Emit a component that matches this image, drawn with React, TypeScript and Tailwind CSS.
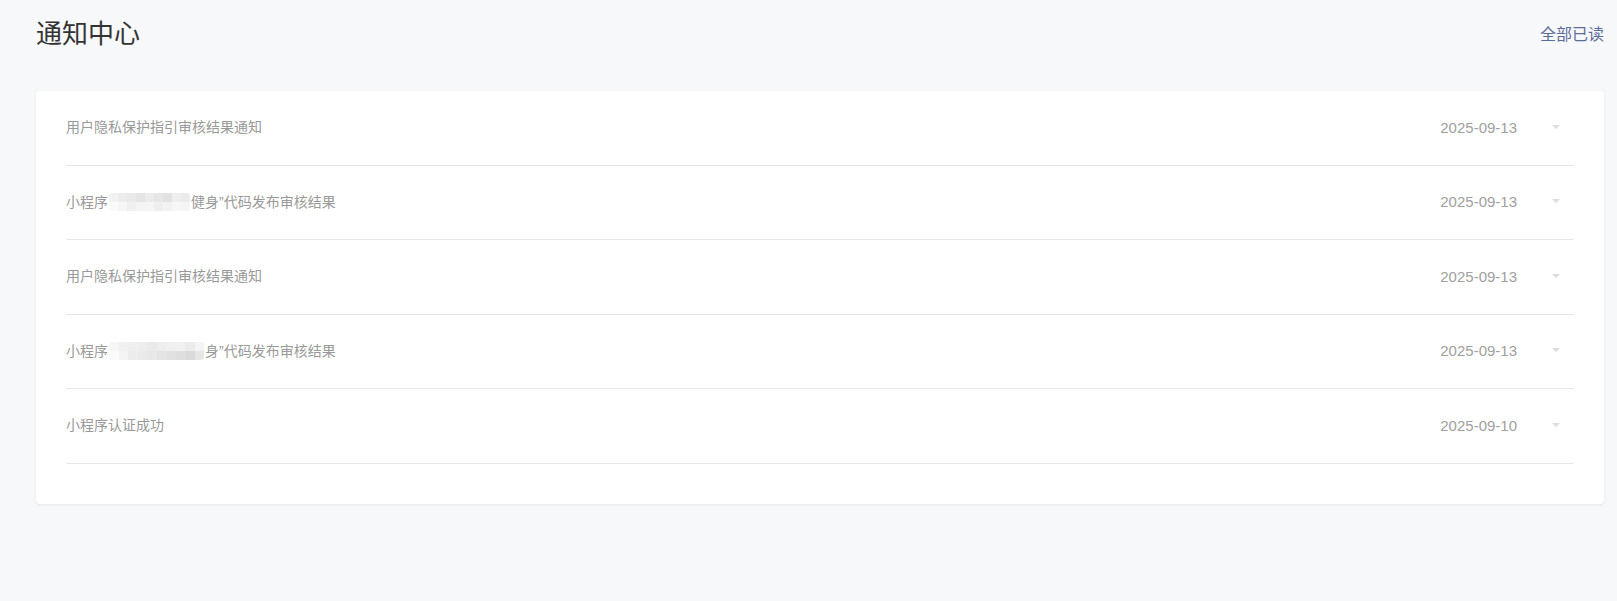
import React from "react";

const FONT = { fontFamily: '"Liberation Sans", "Noto Sans CJK SC", sans-serif' };

type Item = { title: React.ReactNode; date: string };

function Mosaic({ cells, w }: { cells: string[][]; w: number }) {
  return (
    <span className="inline-flex flex-col align-middle mx-[1px] rounded-[3px] overflow-hidden">
      {cells.map((row, i) => (
        <span key={i} className="flex">
          {row.map((c, j) => (
            <span key={j} className="block h-[9px]" style={{ width: w, background: c }} />
          ))}
        </span>
      ))}
    </span>
  );
}

const M1 = [
  ["#f2f2f2", "#ececec", "#e9e9e9", "#e4e4e4", "#ebebeb", "#e6e6e6", "#e2e2e2", "#eeeeee", "#ebebeb"],
  ["#fafafa", "#f6f6f6", "#efefef", "#f4f4f4", "#f5f5f5", "#eeeeee", "#f2f2f2", "#f7f7f7", "#f5f5f5"],
];
const M2 = [
  ["#f6f6f6", "#f1f1f1", "#efefef", "#ededed", "#eaeaea", "#ededed", "#efefef", "#f0f0f0", "#ececec", "#f3f3f3"],
  ["#fafafa", "#f4f4f4", "#ececec", "#eaeaea", "#e8e8e8", "#e4e4e4", "#e1e1e1", "#dedede", "#dadada", "#e6e6e6"],
];

const items: Item[] = [
  { title: "用户隐私保护指引审核结果通知", date: "2025-09-13" },
  {
    title: (
      <>
        小程序<Mosaic cells={M1} w={9} />健身”代码发布审核结果
      </>
    ),
    date: "2025-09-13",
  },
  { title: "用户隐私保护指引审核结果通知", date: "2025-09-13" },
  {
    title: (
      <>
        小程序<Mosaic cells={M2} w={9.5} />身”代码发布审核结果
      </>
    ),
    date: "2025-09-13",
  },
  { title: "小程序认证成功", date: "2025-09-10" },
];

export default function App() {
  return (
    <div className="min-h-[601px] bg-[#f7f8fa] pl-[36px] pr-[13px]" style={FONT}>
      <div className="flex items-center justify-between pt-[14px] h-[40px] box-content">
        <h1 className="text-[26px] leading-[38px] text-[#333]">通知中心</h1>
        <button className="text-[16px] leading-[20px] mt-[1px] text-[#5b6b9a] cursor-pointer">全部已读</button>
      </div>

      <div className="mt-[37px] bg-white rounded-[4px] shadow-[0_1px_3px_rgba(0,0,0,0.08)] px-[30px] pb-[40px]">
        {items.map((it, i) => (
          <div key={i} className="h-[74.5px] flex items-center border-b border-[#e6e6e6]">
            <div className="flex-1 text-[14px] text-[#999] flex items-center">{it.title}</div>
            <div className="text-[15px] text-[#a0a0a0] mr-[35px]">{it.date}</div>
            <span className="mr-[14px] mb-[2px] w-0 h-0 border-l-[4px] border-r-[4px] border-t-[4px] border-l-transparent border-r-transparent border-t-[#dcdcdc]" />
          </div>
        ))}
      </div>
    </div>
  );
}
